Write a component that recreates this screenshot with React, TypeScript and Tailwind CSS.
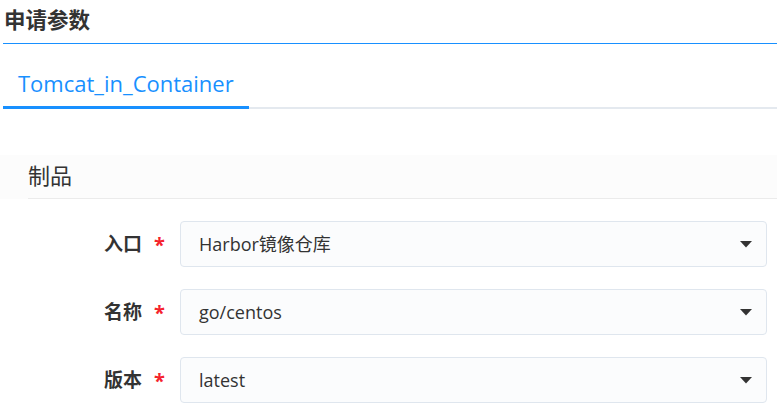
const rows = [
  { label: "入口", value: "Harbor镜像仓库" },
  { label: "名称", value: "go/centos" },
  { label: "版本", value: "latest" },
];

const Caret = () => (
  <svg width="12" height="7" viewBox="0 0 12 7" className="shrink-0">
    <path d="M0 0 H12 L6 6.5 Z" fill="#333" />
  </svg>
);

export default function App() {
  return (
    <div
      className="w-[777px] h-[415px] bg-white overflow-hidden text-[#333]"
      style={{ fontFamily: '"Open Sans", "Noto Sans CJK SC", sans-serif' }}
    >
      <div className="pl-[3px]">
        <div className="h-[43px] flex items-center pb-[2px]">
          <h2 className="text-[21.5px] font-bold text-[#333] pl-[1px]">申请参数</h2>
        </div>
        <div className="h-px bg-[#1890ff]" />

        <div className="flex mt-[19px] border-b-2 border-[#e4e9ef] h-[46px]">
          <div className="px-[15px] border-b-[3px] border-[#1890ff] -mb-[2px] text-[22px] text-[#1890ff] leading-[40px]">
            Tomcat_in_Container
          </div>
        </div>
      </div>

      <div className="mt-[46px] bg-[#fcfcfc] h-[44px] flex items-end">
        <div className="ml-[28px] flex-1 border-b border-[#ebebeb] h-full flex items-center pb-[2px]">
          <span className="text-[22px] text-[#333]">制品</span>
        </div>
      </div>

      <div className="mt-[22px] flex flex-col gap-[22px]">
        {rows.map((r) => (
          <div key={r.label} className="flex items-center">
            <div className="w-[180px] flex items-center justify-end pr-[15px]">
              <span className="text-[19px] font-bold text-[#333]">{r.label}</span>
              <span className="ml-[12px] text-[20px] text-[#f5222d] font-bold leading-none mt-[2px]">*</span>
            </div>
            <div className="w-[587px] h-[46px] border border-[#dfe6ee] rounded-[4px] bg-[#fbfcfd] flex items-center justify-between pl-[18px] pr-[14px]">
              <span className="text-[18px] text-[#333]">{r.value}</span>
              <Caret />
            </div>
          </div>
        ))}
      </div>
    </div>
  );
}
